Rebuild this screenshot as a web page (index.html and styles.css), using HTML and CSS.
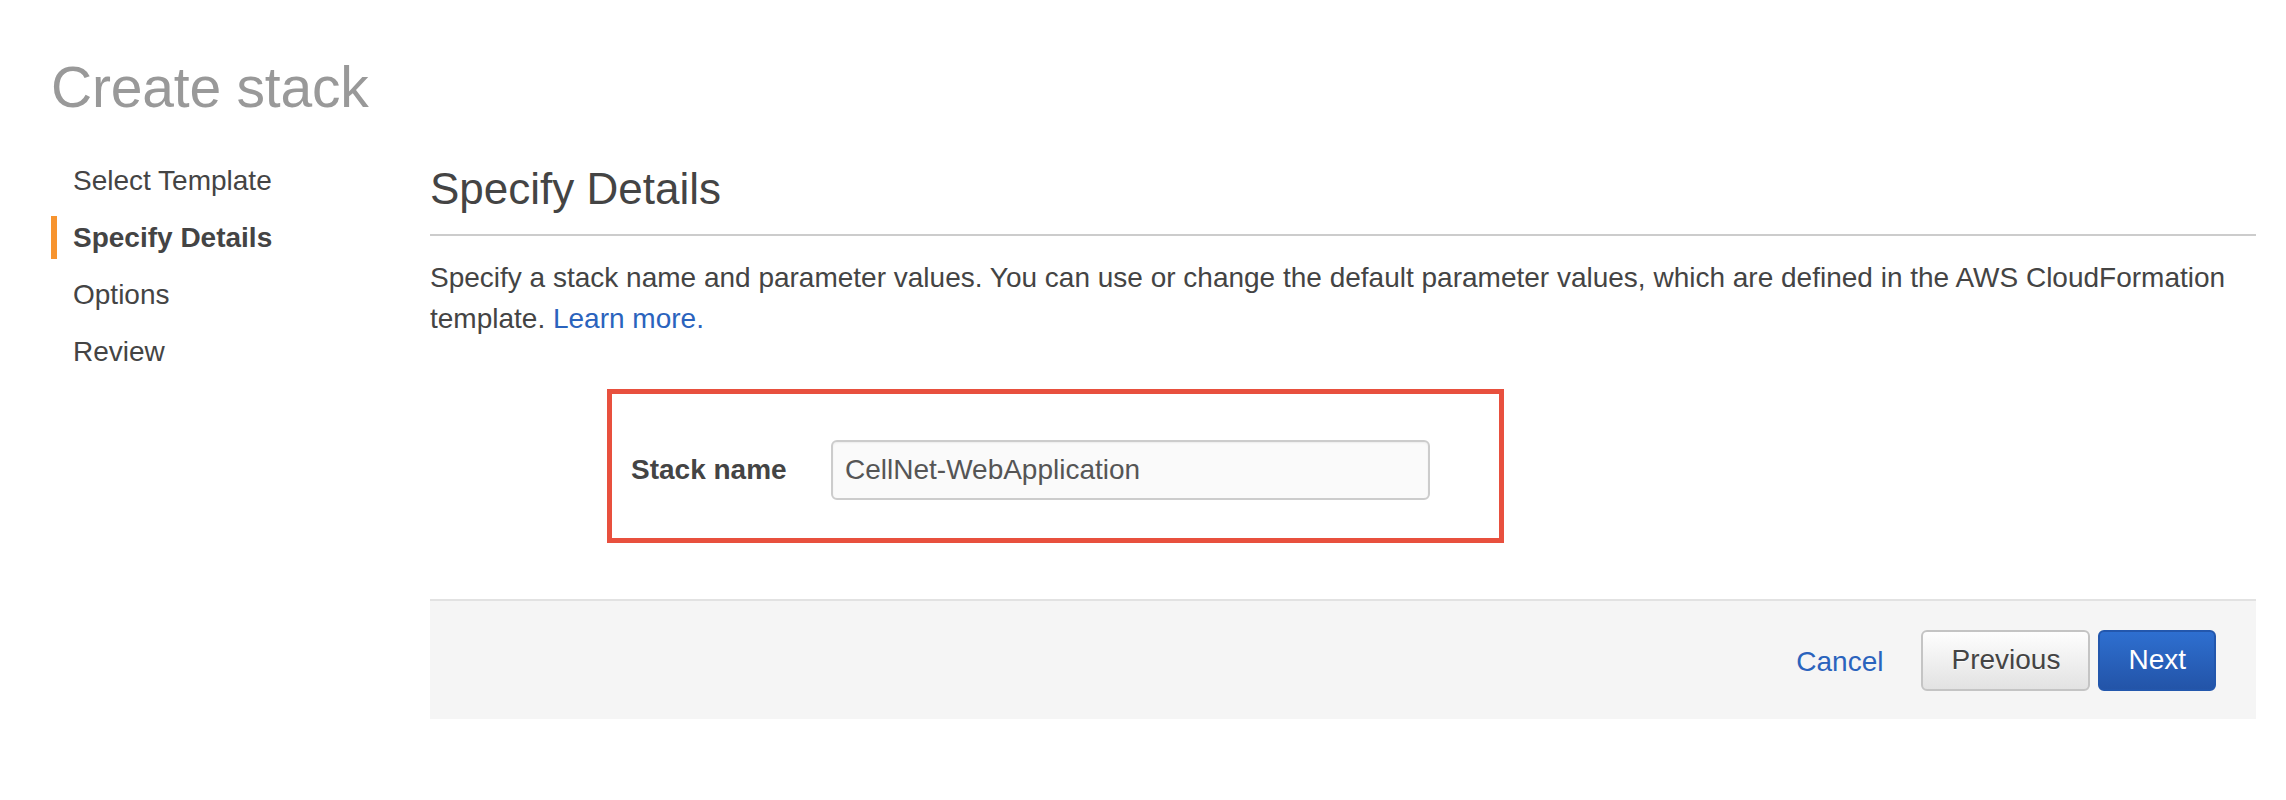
FILE: index.html
```html
<!DOCTYPE html>
<html lang="en">
<head>
<meta charset="utf-8">
<title>Create stack</title>
<link rel="stylesheet" href="styles.css">
</head>
<body>
<div class="page">
  <h1 class="title">Create stack</h1>
  <div class="layout">
    <nav class="steps">
      <div class="step">Select Template</div>
      <div class="step active">Specify Details</div>
      <div class="step">Options</div>
      <div class="step">Review</div>
    </nav>
    <main class="main">
      <h2 class="heading">Specify Details</h2>
      <div class="divider"></div>
      <p class="intro">Specify a stack name and parameter values. You can use or change the default parameter values, which are defined in the AWS CloudFormation template. <a class="link" href="#">Learn more.</a></p>
      <div class="highlight">
        <label class="field-label">Stack name</label>
        <div class="input">CellNet-WebApplication</div>
      </div>
      <div class="footer">
        <a class="link cancel" href="#">Cancel</a>
        <button class="btn btn-default">Previous</button>
        <button class="btn btn-primary">Next</button>
      </div>
    </main>
  </div>
</div>
</body>
</html>
```
FILE: styles.css
```css
html, body {
  margin: 0;
  padding: 0;
  background: #ffffff;
}
body {
  font-family: "Liberation Sans", Helvetica, Arial, sans-serif;
  color: #444444;
}
.page {
  padding: 0 30px 0 51px;
}
.title {
  margin: 0;
  padding-top: 54px;
  font-size: 57px;
  line-height: 66px;
  font-weight: normal;
  color: #999999;
  height: 66px;
  letter-spacing: -0.2px;
}
.layout {
  display: flex;
  margin-top: 39px;
}
.steps {
  width: 330px;
  margin-right: 49px;
  flex: none;
  display: flex;
  flex-direction: column;
  gap: 14px;
}
.step {
  font-size: 28px;
  line-height: 43px;
  height: 43px;
  padding-left: 22px;
  color: #444444;
}
.step.active {
  font-weight: bold;
  padding-left: 16px;
  border-left: 6px solid #f7942f;
}
.main {
  flex: 1;
  min-width: 0;
}
.heading {
  margin: 4px 0 0 0;
  font-size: 44px;
  line-height: 52px;
  font-weight: normal;
  color: #444444;
}
.divider {
  margin-top: 19px;
  height: 2px;
  background: #cccccc;
}
.intro {
  margin: 21px 0 0 0;
  font-size: 28px;
  line-height: 41px;
  color: #444444;
}
.link {
  color: #2a63bd;
  text-decoration: none;
}
.highlight {
  margin: 50px 0 0 177px;
  width: 868px;
  height: 144px;
  border: 5px solid #e8503e;
  display: flex;
  align-items: center;
  padding: 0 0 0 19px;
  box-sizing: content-box;
}
.field-label {
  flex: none;
  width: 200px;
  font-size: 28px;
  font-weight: bold;
  color: #444444;
  margin-top: 8px;
}
.input {
  flex: none;
  width: 571px;
  height: 56px;
  margin-top: 8px;
  border: 2px solid #cccccc;
  border-radius: 6px;
  background: #fafafa;
  box-shadow: inset 0 1px 2px rgba(0,0,0,0.06);
  font-size: 28px;
  line-height: 56px;
  padding: 0 12px;
  color: #555555;
}
.footer {
  margin-top: 56px;
  height: 118px;
  border-top: 2px solid #e2e2e2;
  background: #f5f5f5;
  display: flex;
  align-items: center;
  justify-content: flex-end;
  padding: 0 40px;
}
.cancel {
  font-size: 28px;
  margin-right: 30px;
  margin-top: 3px;
}
.btn {
  font-family: "Liberation Sans", Helvetica, Arial, sans-serif;
  font-size: 28px;
  height: 61px;
  padding: 0 28px;
  border-radius: 6px;
  border: 2px solid;
  margin-left: 8px;
  cursor: pointer;
}
.btn-default {
  color: #444444;
  border-color: #c4c4c4;
  background: linear-gradient(#fefefe, #e2e2e2);
  text-shadow: 0 1px 0 rgba(255,255,255,0.8);
}
.btn-primary {
  color: #ffffff;
  border-color: #2357ad;
  background: linear-gradient(#2e6fd0, #2354a8);
}
```
